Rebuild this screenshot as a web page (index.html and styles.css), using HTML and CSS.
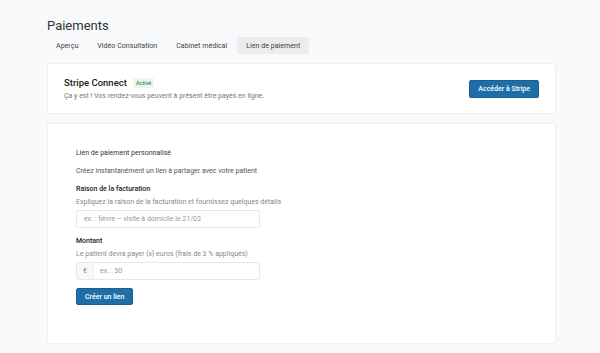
FILE: index.html
```html
<!DOCTYPE html>
<html lang="fr">
<head>
<meta charset="utf-8">
<link rel="stylesheet" href="styles.css">
</head>
<body>
<main class="page">
  <h1 class="title">Paiements</h1>
  <nav class="tabs">
    <span class="tab">Aperçu</span>
    <span class="tab">Vidéo Consultation</span>
    <span class="tab">Cabinet médical</span>
    <span class="tab active">Lien de paiement</span>
  </nav>
  <section class="card stripe">
    <div class="stripe-info">
      <div class="stripe-head">
        <span class="stripe-title">Stripe Connect</span>
        <span class="badge">Activé</span>
      </div>
      <p class="muted">Ça y est ! Vos rendez-vous peuvent à présent être payés en ligne.</p>
    </div>
    <button class="btn">Accéder à Stripe</button>
  </section>
  <section class="card form-card">
    <p class="section-title">Lien de paiement personnalisé</p>
    <p class="intro">Créez instantanément un lien à partager avec votre patient</p>
    <div class="field">
      <label class="label">Raison de la facturation</label>
      <p class="help">Expliquez la raison de la facturation et fournissez quelques détails</p>
      <div class="input"><span class="placeholder">ex. : fièvre – visite à domicile le 21/03</span></div>
    </div>
    <div class="field">
      <label class="label">Montant</label>
      <p class="help">Le patient devra payer {x} euros (frais de 3 % appliqués)</p>
      <div class="input group"><span class="addon">€</span><span class="placeholder">ex. : 30</span></div>
    </div>
    <button class="btn create">Créer un lien</button>
  </section>
</main>
</body>
</html>
```
FILE: styles.css
```css
* { box-sizing: border-box; }
html, body { margin: 0; padding: 0; }
body {
  background: #f8f9fb;
  font-family: Roboto, "Liberation Sans", sans-serif;
  color: #333;
  width: 600px;
  height: 353px;
  overflow: hidden;
}
p { margin: 0; }
.page {
  padding: 18px 44px 0 47px;
}
.title {
  margin: 0;
  font-size: 13px;
  font-weight: 400;
  color: #333;
  line-height: 16px;
}
.tabs {
  display: flex;
  margin-top: 3px;
}
.tab {
  font-size: 7.1px;
  font-weight: 400;
  color: #444;
  padding: 0 9px;
  height: 17px;
  line-height: 17px;
  border-radius: 2px;
  margin-right: 1px;
}
.tab.active { background: #ececee; color: #444; }
.card {
  background: #fff;
  border: 1px solid #eef0f3;
  border-radius: 2px;
}
.stripe {
  margin-top: 9px;
  height: 51px;
  display: flex;
  align-items: center;
  justify-content: space-between;
  padding: 0 16px 0 16px;
}
.stripe-head { display: flex; align-items: center; gap: 6px; }
.stripe-title { font-size: 9.5px; font-weight: 500; color: #222; }
.badge {
  font-size: 5.5px;
  font-weight: 500;
  color: #3c8f4e;
  background: #ebf6ee;
  padding: 2px 3px;
  border-radius: 2px;
}
.muted { font-size: 7px; color: #777; margin-top: 4px; }
.btn {
  font-family: inherit;
  background: #1e6fa8;
  border: 1px solid #1a5f91;
  color: #fff;
  font-size: 7px;
  font-weight: 500;
  border-radius: 2px;
  height: 18px;
  padding: 0 8px;
  display: block;
}
.form-card {
  margin-top: 9px;
  height: 221px;
  padding: 24px 28px;
}
.section-title { font-size: 7px; color: #333; line-height: 10px; height: 10px; }
.intro { font-size: 7px; color: #555; margin-top: 8px; line-height: 10px; height: 10px; }
.field { margin-top: 8px; }
.label { display: block; font-size: 7px; font-weight: 500; color: #222; line-height: 10px; height: 10px; }
.help { font-size: 7px; color: #888; margin-top: 3px; line-height: 10px; height: 10px; }
.input {
  margin-top: 3px;
  width: 184px;
  height: 18px;
  border: 1px solid #e6e8eb;
  border-radius: 2px;
  display: flex;
  align-items: center;
  padding-left: 7px;
}
.placeholder { font-size: 7px; color: #999; line-height: 10px; }
.group { padding-left: 0; }
.addon {
  width: 17px;
  height: 100%;
  background: #f7f8f9;
  border-right: 1px solid #eceef0;
  display: flex;
  align-items: center;
  justify-content: center;
  font-size: 7px;
  color: #888;
  margin-right: 6px;
}
.create { margin-top: 8px; height: 17px; }
```
